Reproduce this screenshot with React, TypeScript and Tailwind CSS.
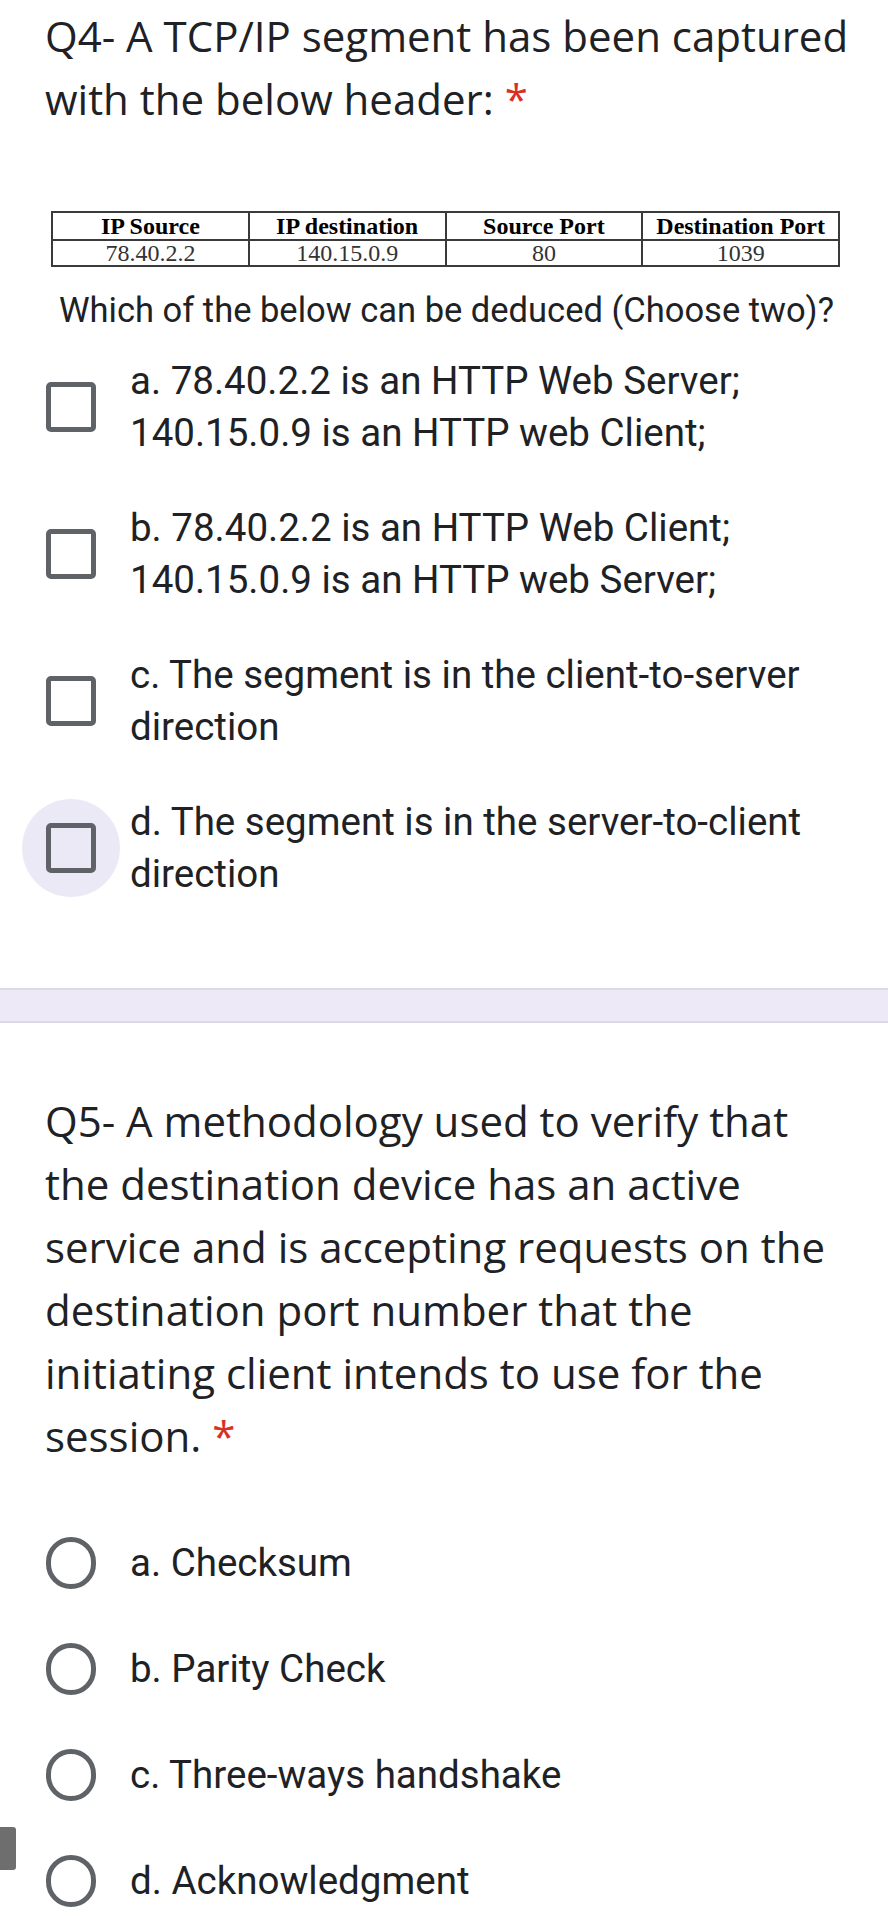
import React from 'react';

interface ChoiceProps {
  lines: string[];
  kind: 'checkbox' | 'radio';
  focused?: boolean;
}

const Choice: React.FC<ChoiceProps> = ({ lines, kind, focused = false }) => {
  return (
    <div className="flex items-center pl-[22px]">
      <div
        className={`flex w-[98px] shrink-0 items-center justify-center rounded-full ${
          kind === 'checkbox' ? 'h-[98px]' : 'h-[52px]'
        } ${focused ? 'bg-[#ece9f6]' : ''}`}
      >
        {kind === 'checkbox' ? (
          <div className="h-[50px] w-[50px] rounded-[5px] border-[5px] border-[#5f6368]"></div>
        ) : (
          <div className="h-[52px] w-[50px] rounded-full border-[5px] border-[#5f6368]"></div>
        )}
      </div>
      <div className="ml-[10px] font-['Roboto',sans-serif] text-[38.5px] leading-[52px] whitespace-nowrap">
        {lines.map((line, index) => (
          <div key={index}>{line}</div>
        ))}
      </div>
    </div>
  );
};

const headers = ['IP Source', 'IP destination', 'Source Port', 'Destination Port'];
const values = ['78.40.2.2', '140.15.0.9', '80', '1039'];

const App: React.FC = () => {
  return (
    <div className="relative min-h-[1920px] w-[888px] overflow-hidden bg-white text-[#202124]">
      {/* Q4 */}
      <h2 className="px-[45px] pt-[4px] font-['Open_Sans',sans-serif] text-[42px] leading-[63px] whitespace-nowrap">
        Q4- A TCP/IP segment has been captured
        <br />
        with the below header: <span className="text-[#d93025]">*</span>
      </h2>

      <div className="mt-[81px] pl-[51px]">
        <table className="w-[789px] table-fixed border-collapse font-['Liberation_Serif',serif] text-[24px]">
          <thead>
            <tr>
              {headers.map((h) => (
                <th key={h} className="h-[28px] border-2 border-[#3a3a3a] p-0 leading-[24px] font-bold text-black">
                  {h}
                </th>
              ))}
            </tr>
          </thead>
          <tbody>
            <tr>
              {values.map((v) => (
                <td key={v} className="h-[26px] border-2 border-[#3a3a3a] p-0 text-center leading-[24px] text-[#333]">
                  {v}
                </td>
              ))}
            </tr>
          </tbody>
        </table>
      </div>

      <p className="mt-[16px] pl-[59px] font-['Roboto',sans-serif] text-[34.5px] leading-[54px] whitespace-nowrap">
        Which of the below can be deduced (Choose two)?
      </p>

      <div className="mt-[18px] flex flex-col gap-[43px]">
        <Choice kind="checkbox" lines={['a. 78.40.2.2 is an HTTP Web Server;', '140.15.0.9 is an HTTP web Client;']} />
        <Choice kind="checkbox" lines={['b. 78.40.2.2 is an HTTP Web Client;', '140.15.0.9 is an HTTP web Server;']} />
        <Choice kind="checkbox" lines={['c. The segment is in the client-to-server', 'direction']} />
        <Choice kind="checkbox" focused lines={['d. The segment is in the server-to-client', 'direction']} />
      </div>

      {/* section divider */}
      <div className="mt-[88px] h-[35px] border-y-2 border-[#dcd8e4] bg-[#ede9f7]"></div>

      {/* Q5 */}
      <h2 className="mt-[66px] px-[45px] font-['Open_Sans',sans-serif] text-[42px] leading-[63px] whitespace-nowrap">
        Q5- A methodology used to verify that
        <br />
        the destination device has an active
        <br />
        service and is accepting requests on the
        <br />
        destination port number that the
        <br />
        initiating client intends to use for the
        <br />
        session. <span className="text-[#d93025]">*</span>
      </h2>

      <div className="mt-[70px] flex flex-col gap-[54px]">
        <Choice kind="radio" lines={['a. Checksum']} />
        <Choice kind="radio" lines={['b. Parity Check']} />
        <Choice kind="radio" lines={['c. Three-ways handshake']} />
        <Choice kind="radio" lines={['d. Acknowledgment']} />
      </div>

      {/* scroll handle */}
      <div className="absolute left-0 top-[1827px] h-[43px] w-[16px] rounded-r-[3px] bg-[#6e6e6e]"></div>
    </div>
  );
};

export default App;
